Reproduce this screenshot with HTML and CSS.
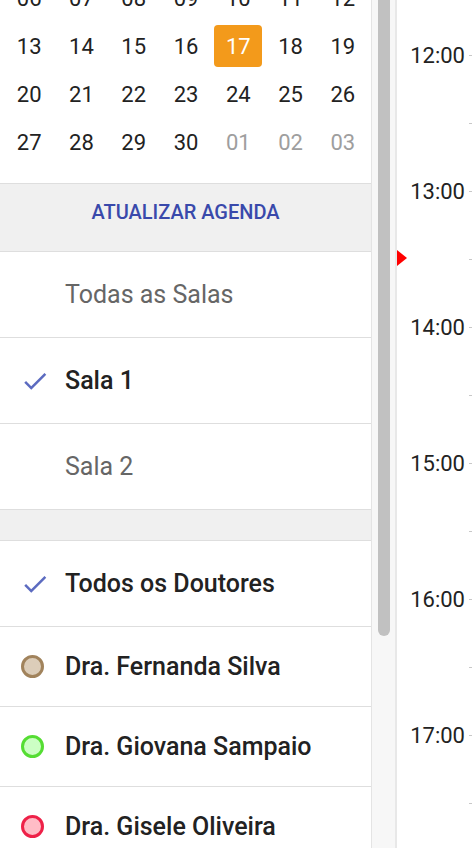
FILE: index.html
```html
<!DOCTYPE html>
<html lang="pt-BR">
<head>
    <meta charset="UTF-8">
    <meta name="viewport" content="width=device-width, initial-scale=1.0">
    <title>Agenda</title>
    <link rel="stylesheet" href="styles.css">
</head>
<body>
    <div class="app">
        <!-- Filtros -->
        <div class="sidebar">
            <div class="calendar">
                <span class="day">06</span><span class="day">07</span><span class="day">08</span><span class="day">09</span><span class="day">10</span><span class="day">11</span><span class="day">12</span>
                <span class="day">13</span><span class="day">14</span><span class="day">15</span><span class="day">16</span><span class="day"><span class="today">17</span></span><span class="day">18</span><span class="day">19</span>
                <span class="day">20</span><span class="day">21</span><span class="day">22</span><span class="day">23</span><span class="day">24</span><span class="day">25</span><span class="day">26</span>
                <span class="day">27</span><span class="day">28</span><span class="day">29</span><span class="day">30</span><span class="day other">01</span><span class="day other">02</span><span class="day other">03</span>
            </div>

            <div class="refresh">ATUALIZAR AGENDA</div>

            <div class="option muted"><span class="mark"></span>Todas as Salas</div>
            <div class="option selected">
                <span class="mark">
                    <svg width="30" height="30" viewBox="0 0 24 24"><path d="M9 16.17L4.83 12l-1.42 1.41L9 19 21 7l-1.41-1.41z"/></svg>
                </span>Sala 1
            </div>
            <div class="option muted"><span class="mark"></span>Sala 2</div>

            <div class="spacer"></div>

            <div class="option selected">
                <span class="mark">
                    <svg width="30" height="30" viewBox="0 0 24 24"><path d="M9 16.17L4.83 12l-1.42 1.41L9 19 21 7l-1.41-1.41z"/></svg>
                </span>Todos os Doutores
            </div>
            <div class="option doctor"><span class="mark"><span class="dot brown"></span></span>Dra. Fernanda Silva</div>
            <div class="option doctor"><span class="mark"><span class="dot green"></span></span>Dra. Giovana Sampaio</div>
            <div class="option doctor"><span class="mark"><span class="dot red"></span></span>Dra. Gisele Oliveira</div>
        </div>

        <div class="scrollbar"><div class="thumb"></div></div>

        <!-- Linha do tempo -->
        <div class="timeline">
            <div class="slot"><span class="tick"></span></div>
            <div class="slot"><span class="label">12:00</span><span class="tick"></span></div>
            <div class="slot"><span class="tick"></span></div>
            <div class="slot"><span class="label">13:00</span><span class="tick"></span></div>
            <div class="slot"><span class="tick"></span></div>
            <div class="slot"><span class="label">14:00</span><span class="tick"></span></div>
            <div class="slot"><span class="tick"></span></div>
            <div class="slot"><span class="label">15:00</span><span class="tick"></span></div>
            <div class="slot"><span class="tick"></span></div>
            <div class="slot"><span class="label">16:00</span><span class="tick"></span></div>
            <div class="slot"><span class="tick"></span></div>
            <div class="slot"><span class="label">17:00</span><span class="tick"></span></div>
            <div class="slot"><span class="tick"></span></div>
            <div class="now"></div>
        </div>
    </div>
</body>
</html>
```

FILE: styles.css
```css
* {
    margin: 0;
    padding: 0;
    box-sizing: border-box;
    font-family: Roboto, "Liberation Sans", sans-serif;
}

body {
    background-color: #fff;
    color: #222;
    width: 472px;
    height: 848px;
    overflow: hidden;
}

.app {
    display: flex;
    height: 848px;
}

.sidebar {
    width: 371px;
    flex-shrink: 0;
    overflow: hidden;
    background-color: #fff;
}

/* Calendar (scrolled, first row is cut off) */
.calendar {
    display: grid;
    grid-template-columns: repeat(7, 1fr);
    grid-auto-rows: 48px;
    margin-top: -26px;
    padding: 0 2px 17px 3px;
    border-bottom: 1px solid #dedede;
}

.day {
    display: flex;
    align-items: center;
    justify-content: center;
    font-size: 22px;
    color: #222;
}

.day.other {
    color: #9e9e9e;
}

.today {
    display: flex;
    align-items: center;
    justify-content: center;
    width: 48px;
    height: 42px;
    border-radius: 4px;
    background-color: #f39a1b;
    color: #fff;
}

.refresh {
    height: 68px;
    display: flex;
    align-items: center;
    justify-content: center;
    padding-bottom: 12px;
    background-color: #f0f0f0;
    border-bottom: 1px solid #dedede;
    color: #3949ab;
    font-size: 20px;
    font-weight: 500;
}

.option {
    height: 86px;
    display: flex;
    align-items: center;
    font-size: 25px;
    border-bottom: 1px solid #dedede;
}

.option.muted {
    color: #666;
}

.option.selected {
    font-weight: 500;
    color: #222;
}

.option.doctor {
    height: 80px;
    font-weight: 500;
    color: #222;
}

.mark {
    width: 65px;
    height: 30px;
    flex-shrink: 0;
    display: flex;
    align-items: center;
    justify-content: center;
    padding-left: 5px;
}

.mark svg {
    fill: #5c6bc0;
}

.dot {
    width: 23px;
    height: 23px;
    border-radius: 50%;
    border: 3px solid;
    margin-right: 5px;
}

.dot.brown {
    border-color: #a1835c;
    background-color: #dccdb9;
}

.dot.green {
    border-color: #55dd33;
    background-color: #ccffc4;
}

.dot.red {
    border-color: #ee2148;
    background-color: #ffbcc6;
}

.spacer {
    height: 31px;
    background-color: #f0f0f0;
    border-bottom: 1px solid #dedede;
}

/* Scrollbar between panes */
.scrollbar {
    width: 26px;
    flex-shrink: 0;
    padding: 0 5px 0 6px;
    background-color: #f7f7f7;
    border-left: 1px solid #e4e4e4;
    border-right: 2px solid #e8e8e8;
}

.thumb {
    height: 646px;
    margin-top: -10px;
    background-color: #c1c1c1;
    border-radius: 6px;
}

/* Timeline */
.timeline {
    flex: 1;
    position: relative;
    margin-top: -47px;
}

.slot {
    height: 68px;
    display: flex;
    align-items: center;
    justify-content: flex-end;
}

.label {
    font-size: 22px;
    color: #222;
}

.tick {
    width: 3px;
    height: 1px;
    margin-left: 4px;
    background-color: #c8c8c8;
}

.now {
    position: absolute;
    left: 0;
    top: 297px;
    width: 0;
    height: 0;
    border-left: 10px solid #ff0000;
    border-top: 8px solid transparent;
    border-bottom: 8px solid transparent;
}
```
